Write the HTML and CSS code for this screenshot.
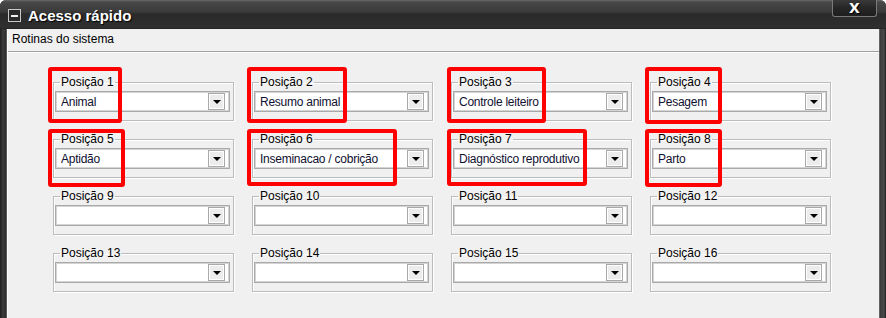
FILE: index.html
```html
<!DOCTYPE html>
<html lang="pt-BR">
<head>
    <meta charset="UTF-8">
    <title>Acesso rápido</title>
    <link rel="stylesheet" href="styles.css">
</head>
<body>
    <div class="window">
        <div class="titlebar">
            <span class="sysbtn"><span></span></span>
            <span class="title">Acesso rápido</span>
            <span class="close">X</span>
        </div>
        <div class="client">
            <div class="header">Rotinas do sistema</div>
            <div class="grid">
                <fieldset class="group"><legend>Posição 1</legend><div class="combo"><span class="value">Animal</span><span class="arrow"></span></div></fieldset>
                <fieldset class="group"><legend>Posição 2</legend><div class="combo"><span class="value">Resumo animal</span><span class="arrow"></span></div></fieldset>
                <fieldset class="group"><legend>Posição 3</legend><div class="combo"><span class="value">Controle leiteiro</span><span class="arrow"></span></div></fieldset>
                <fieldset class="group"><legend>Posição 4</legend><div class="combo"><span class="value">Pesagem</span><span class="arrow"></span></div></fieldset>
                <fieldset class="group"><legend>Posição 5</legend><div class="combo"><span class="value">Aptidão</span><span class="arrow"></span></div></fieldset>
                <fieldset class="group"><legend>Posição 6</legend><div class="combo"><span class="value">Inseminacao / cobrição</span><span class="arrow"></span></div></fieldset>
                <fieldset class="group"><legend>Posição 7</legend><div class="combo"><span class="value">Diagnóstico reprodutivo</span><span class="arrow"></span></div></fieldset>
                <fieldset class="group"><legend>Posição 8</legend><div class="combo"><span class="value">Parto</span><span class="arrow"></span></div></fieldset>
                <fieldset class="group"><legend>Posição 9</legend><div class="combo"><span class="value"></span><span class="arrow"></span></div></fieldset>
                <fieldset class="group"><legend>Posição 10</legend><div class="combo"><span class="value"></span><span class="arrow"></span></div></fieldset>
                <fieldset class="group"><legend>Posição 11</legend><div class="combo"><span class="value"></span><span class="arrow"></span></div></fieldset>
                <fieldset class="group"><legend>Posição 12</legend><div class="combo"><span class="value"></span><span class="arrow"></span></div></fieldset>
                <fieldset class="group"><legend>Posição 13</legend><div class="combo"><span class="value"></span><span class="arrow"></span></div></fieldset>
                <fieldset class="group"><legend>Posição 14</legend><div class="combo"><span class="value"></span><span class="arrow"></span></div></fieldset>
                <fieldset class="group"><legend>Posição 15</legend><div class="combo"><span class="value"></span><span class="arrow"></span></div></fieldset>
                <fieldset class="group"><legend>Posição 16</legend><div class="combo"><span class="value"></span><span class="arrow"></span></div></fieldset>
            </div>
        </div>

        <!-- marcações em vermelho -->
        <div class="mark m1"></div>
        <div class="mark m2"></div>
        <div class="mark m3"></div>
        <div class="mark m4"></div>
        <div class="mark m5"></div>
        <div class="mark m6"></div>
        <div class="mark m7"></div>
        <div class="mark m8"></div>
    </div>
</body>
</html>
```

FILE: styles.css
```css
body {
    margin: 0;
    background: #fff;
    font-family: "Liberation Sans", Arial, sans-serif;
    font-size: 12px;
    overflow: hidden;
}

.window {
    position: relative;
    width: 886px;
    height: 318px;
    box-sizing: border-box;
    padding: 0 7px;
    display: flex;
    flex-direction: column;
    background: linear-gradient(90deg, #1e1e1e, #3c3c3c 3px, #2c2c2c 6px, #8a8a8a 7px, #2c2c2c 7px, #2c2c2c calc(100% - 7px), #8a8a8a calc(100% - 7px), #3a3a3a calc(100% - 6px), #4a4a4a calc(100% - 2px), #1e1e1e);
    border-radius: 6px 6px 0 0;
}

.titlebar {
    height: 29px;
    margin: 0 -7px;
    padding: 0 7px;
    display: flex;
    align-items: center;
    position: relative;
    border-radius: 6px 6px 0 0;
    background: linear-gradient(#6a6a6a, #484848 2px, #3a3a3a 12px, #2a2a2a 14px, #2f2f2f 28px, #1c1c1c);
}

.sysbtn {
    width: 11px;
    height: 11px;
    margin-left: 1px;
    margin-top: 2px;
    border: 1px solid #c8c8c8;
    background: #2a2a2a;
    display: flex;
    align-items: center;
    justify-content: center;
}

.sysbtn span {
    width: 7px;
    height: 2px;
    background: #f0f0f0;
}

.title {
    margin-left: 7px;
    margin-top: 1px;
    color: #fff;
    font-size: 15px;
    font-weight: bold;
    text-shadow: 1px 1px 1px #000;
}

.close {
    position: absolute;
    right: 9px;
    top: 0;
    width: 43px;
    height: 16px;
    border: 1px solid #7a7a7a;
    border-top: 0;
    border-radius: 0 0 3px 3px;
    background: linear-gradient(#3a3a3a, #262626 8px, #1e1e1e);
    color: #fff;
    font-family: "DejaVu Sans", sans-serif;
    font-size: 14px;
    font-weight: bold;
    text-align: center;
    line-height: 16px;
    text-shadow: 1px 1px 0 #000;
}

.client {
    flex: 1;
    background: #f0f0f0;
    border-left: 1px solid #fafafa;
}

.header {
    height: 22px;
    padding-left: 4px;
    line-height: 21px;
    border-bottom: 1px solid #a0a0a0;
    box-shadow: 0 1px 0 #fff;
    color: #000;
}

.grid {
    display: grid;
    grid-template-columns: repeat(4, 181px);
    column-gap: 18px;
    row-gap: 11px;
    padding: 23px 0 0 45px;
}

.group {
    margin: 0;
    min-width: 0;
    padding: 0 3px 8px 1px;
    border: 1px solid #bcbcbc;
    box-shadow: inset 1px 1px 0 #fff, 1px 1px 0 #fff;
}

.group legend {
    margin-left: 5px;
    padding: 0 1px;
    line-height: 14px;
    color: #000;
}

.combo {
    height: 21px;
    margin-top: 2px;
    box-sizing: border-box;
    border: 1px solid #a9a9a9;
    box-shadow: inset 0 0 0 1px #d4d4d4;
    background: #fff;
    display: flex;
    align-items: center;
    padding: 2px 4px 2px 5px;
}

.value {
    flex: 1;
    color: #101030;
    letter-spacing: -0.25px;
    white-space: nowrap;
    overflow: hidden;
}

.arrow {
    width: 15px;
    height: 15px;
    border: 1px solid #a9a9a9;
    box-shadow: inset 0 0 0 1px #fff;
    background: #ececec;
    position: relative;
}

.arrow::after {
    content: "";
    position: absolute;
    left: 4px;
    top: 6px;
    border-left: 4px solid transparent;
    border-right: 4px solid transparent;
    border-top: 4px solid #000;
}

.mark {
    position: absolute;
    box-sizing: border-box;
    border: 4px solid #ff0000;
    border-radius: 3px;
}

.m1 { left: 48px; top: 67px; width: 74px; height: 56px; }
.m2 { left: 247px; top: 67px; width: 100px; height: 56px; }
.m3 { left: 447px; top: 67px; width: 99px; height: 56px; }
.m4 { left: 645px; top: 67px; width: 77px; height: 57px; }
.m5 { left: 48px; top: 129px; width: 77px; height: 58px; }
.m6 { left: 247px; top: 129px; width: 150px; height: 57px; }
.m7 { left: 447px; top: 129px; width: 140px; height: 57px; }
.m8 { left: 645px; top: 129px; width: 77px; height: 58px; }
```
